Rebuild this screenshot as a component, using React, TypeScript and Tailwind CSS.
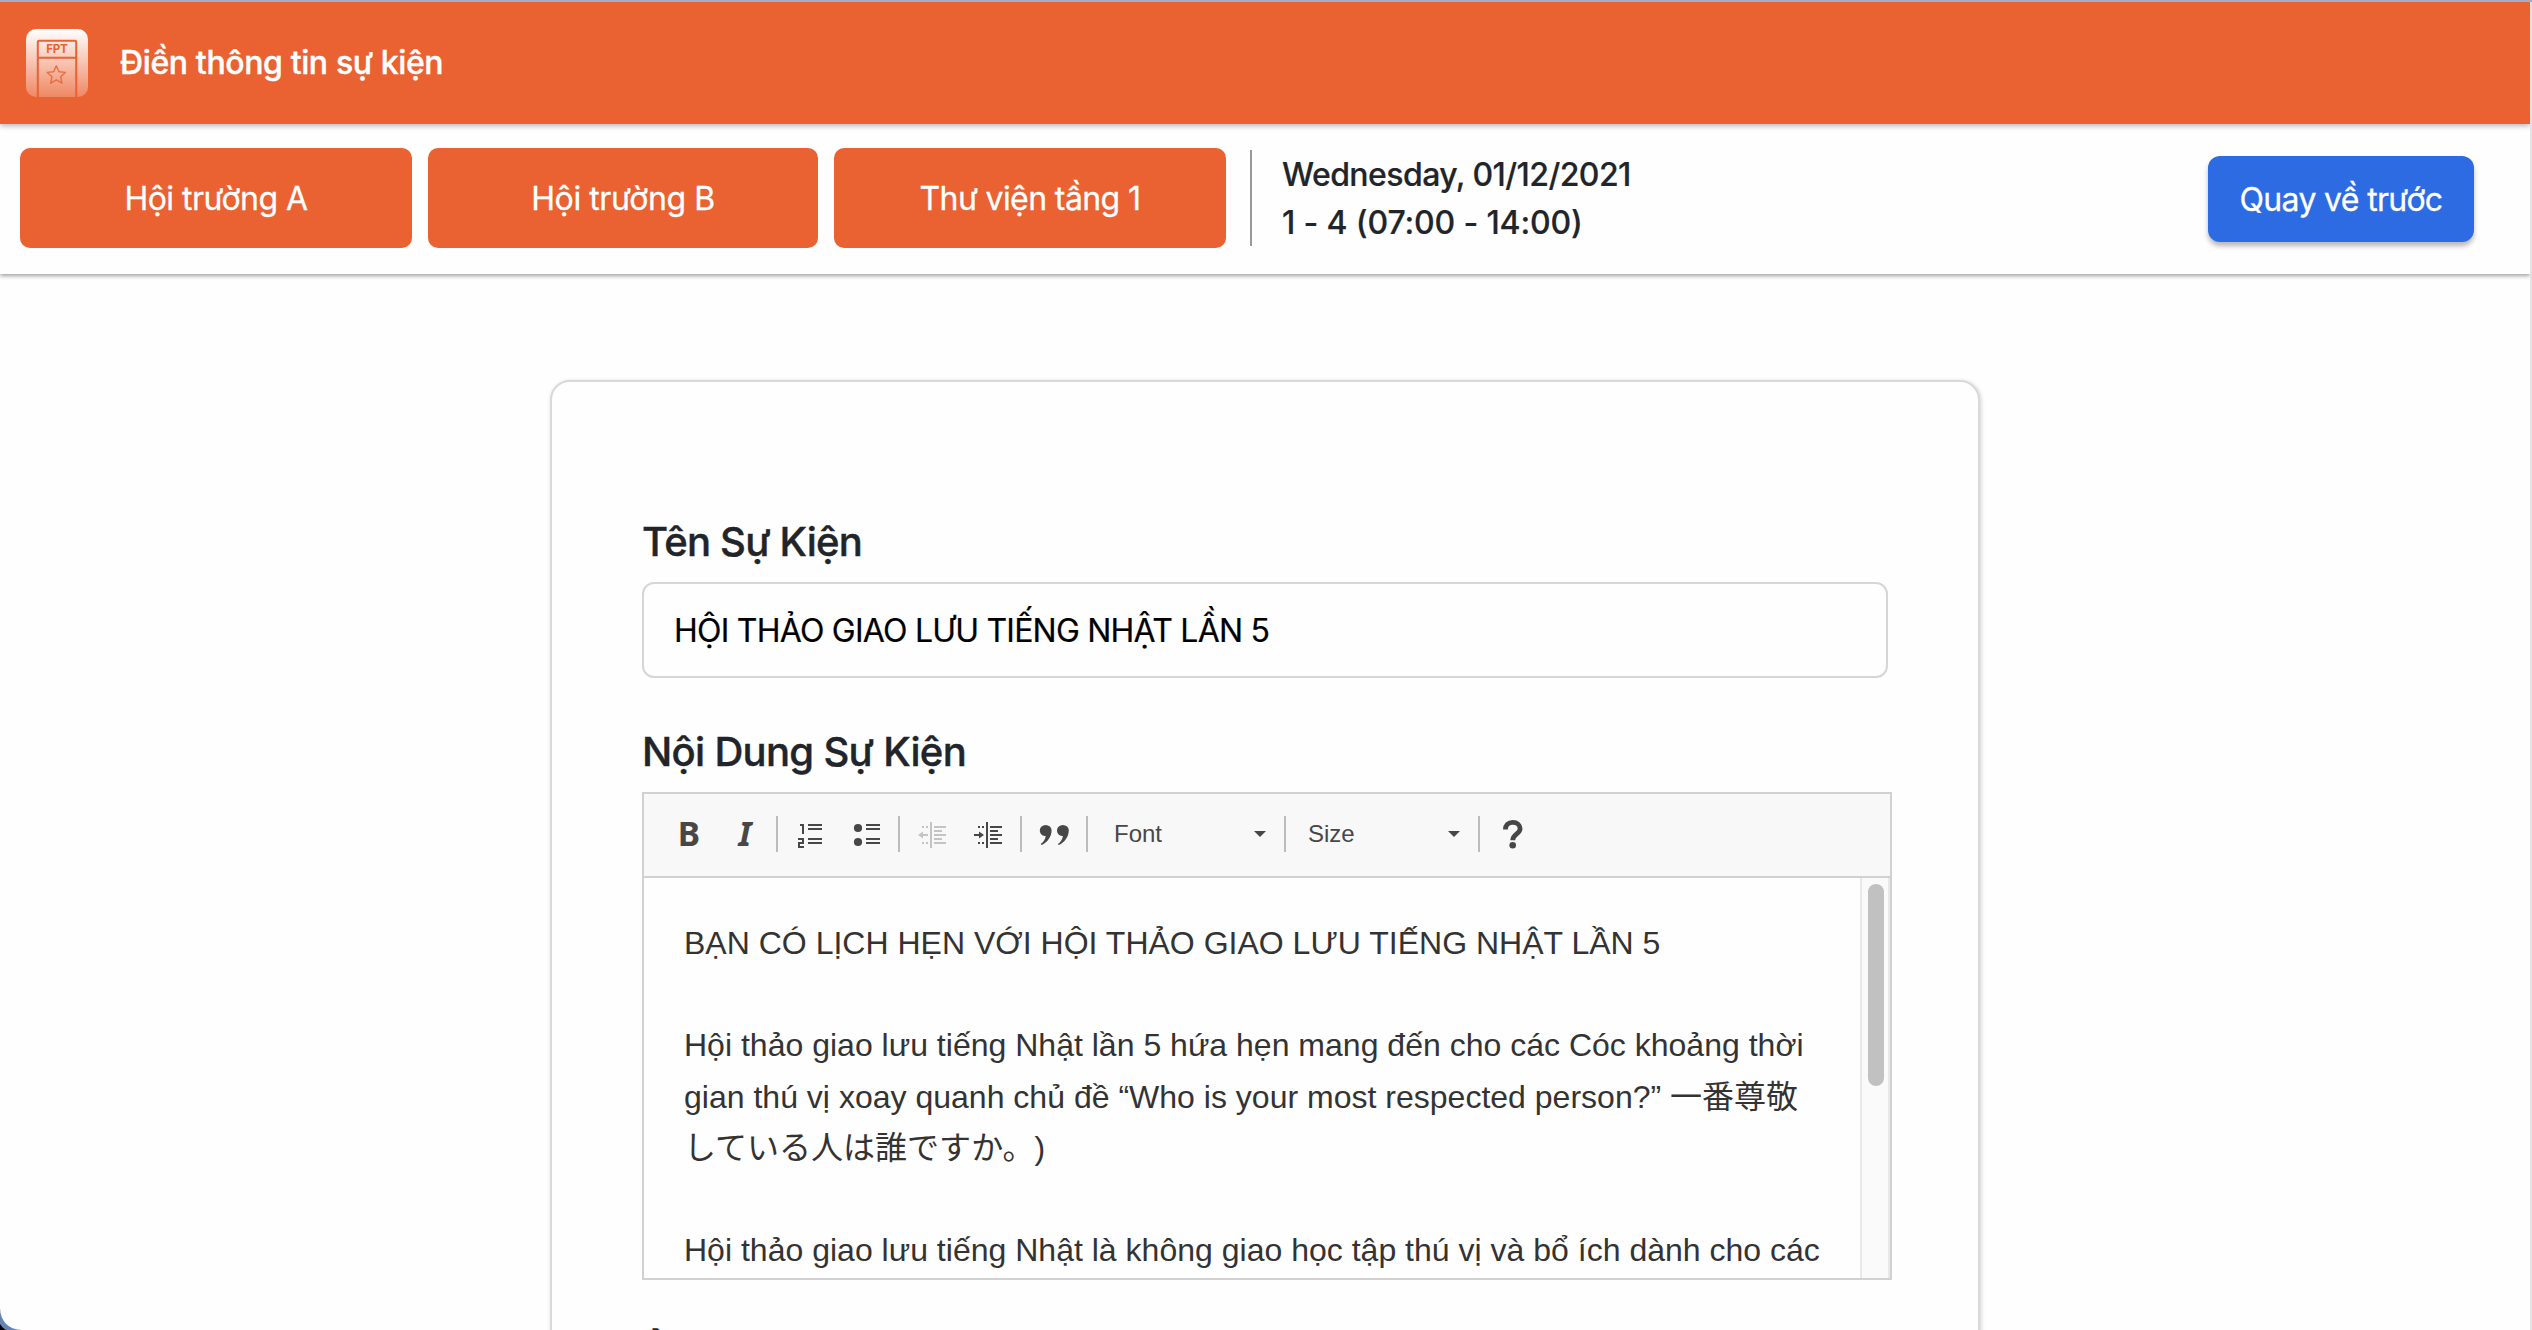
import type { ReactNode } from 'react';

const venues = [
  { name: 'Hội trường A', className: 'w-[392px] tracking-[-0.55px]' },
  { name: 'Hội trường B', className: 'w-[390px] tracking-[-0.42px]' },
  { name: 'Thư viện tầng 1', className: 'w-[392px] tracking-[-0.6px]' },
];

const lines = [
  'BẠN CÓ LỊCH HẸN VỚI HỘI THẢO GIAO LƯU TIẾNG NHẬT LẦN 5',
  '',
  'Hội thảo giao lưu tiếng Nhật lần 5 hứa hẹn mang đến cho các Cóc khoảng thời',
  'gian thú vị xoay quanh chủ đề “Who is your most respected person?” 一番尊敬',
  'している人は誰ですか。)',
  '',
  'Hội thảo giao lưu tiếng Nhật là không giao học tập thú vị và bổ ích dành cho các',
];

function Logo() {
  return (
    <svg className="ml-[26px] block h-[68px] w-[62px]" viewBox="0 0 62 68">
      <defs>
        <linearGradient id="logo-bg" x1="0" y1="0" x2="0" y2="1">
          <stop offset="0" stopColor="#fff" />
          <stop offset="1" stopColor="#fff" stopOpacity="0.24" />
        </linearGradient>
      </defs>
      <rect width="62" height="68" rx="10" fill="url(#logo-bg)" />
      <g fill="none" stroke="#ea6232">
        <path d="M11.8 68V13a1.3 1.3 0 0 1 1.3-1.3h35.8a1.3 1.3 0 0 1 1.3 1.3V68M12 28.7h38" strokeWidth="2" />
        <path
          d="M30.3 36.8l2.7 5.9 6.4.7-4.8 4.3 1.4 6.5-5.7-3.3-5.7 3.3 1.4-6.5-4.8-4.3 6.4-.7z"
          strokeWidth="1.4"
          strokeLinejoin="round"
          opacity="0.85"
        />
      </g>
      <text x="31" y="24" textAnchor="middle" fontFamily="Inter" fontWeight="700" fontSize="11.6" fill="#ea6232" textLength="21.5">
        FPT
      </text>
    </svg>
  );
}

function ToolButton({ children, muted = false }: { children: ReactNode; muted?: boolean }) {
  return (
    <button type="button" className="flex h-14 w-14 shrink-0 items-center justify-center">
      <svg viewBox="0 0 32 32" className={muted ? 'h-8 w-8 overflow-visible text-[#c4c4c4]' : 'h-8 w-8 overflow-visible text-[#474747]'}>
        {children}
      </svg>
    </button>
  );
}

function Separator() {
  return <span className="mx-1 h-9 w-0.5 shrink-0 bg-[#bcbcbc]" />;
}

function IndentLines() {
  return (
    <path
      fill="currentColor"
      d="M14 4h2v26h-2zM18 8h12v2H18zM18 12h8v2h-8zM18 16h12v2H18zM18 20h8v2h-8zM18 24h12v2H18zM6 8h2v2H6zM10 8h2v2h-2zM6 24h2v2H6zM10 24h2v2h-2z"
    />
  );
}

function Caret() {
  return (
    <svg className="h-[6px] w-3" viewBox="0 0 12 6">
      <path d="M0 0h12L6 6z" fill="#474747" />
    </svg>
  );
}

function Toolbar() {
  const quote = 'M1.8 12.3a5.9 5.4 0 0 1 11.8 0c0 6.4-4.2 12.3-10 14.7l-.9-.9c2.8-2 4.6-4.8 5-8.2-3.2.5-5.9-2-5.9-5.6z';
  return (
    <div className="flex h-[84px] items-center border-b-2 border-[#d1d1d1] bg-[#f8f8f8] pb-0.5 pl-[18px]">
      <ToolButton>
        <text x="3.7" y="28" fontFamily="Noto Sans" fontWeight="700" fontSize="33.5" fill="currentColor">B</text>
      </ToolButton>
      <ToolButton>
        <text x="8.4" y="28" fontFamily="Noto Sans" fontWeight="700" fontStyle="italic" fontSize="33.5" fill="currentColor">I</text>
      </ToolButton>
      <span className="ml-0.5 mr-1 h-9 w-0.5 shrink-0 bg-[#bcbcbc]" />
      <ToolButton>
        <path fill="currentColor" d="M14 6h14v2H14zM14 10h14v2H14zM14 20h14v2H14zM14 24h14v2H14zM6 6h4v10H8V8H6z" />
        <path fill="none" stroke="currentColor" strokeWidth="2" d="M4 21h5v4H5v4h5" />
      </ToolButton>
      <ToolButton>
        <path fill="currentColor" d="M16 6h14v2H16zM16 10h14v2H16zM16 20h14v2H16zM16 24h14v2H16z" />
        <circle cx="8" cy="10" r="4.1" fill="currentColor" />
        <circle cx="8" cy="24" r="4.1" fill="currentColor" />
      </ToolButton>
      <Separator />
      <ToolButton muted>
        <IndentLines />
        <path fill="currentColor" d="M2 17l5-3.5V16h5v2H7v2.5z" />
      </ToolButton>
      <ToolButton>
        <IndentLines />
        <path fill="currentColor" d="M12 17l-5-3.5V16H2v2h5v2.5z" />
      </ToolButton>
      <Separator />
      <ToolButton>
        <path fill="currentColor" d={quote} />
        <path fill="currentColor" d={quote} transform="translate(17.2 0)" />
      </ToolButton>
      <Separator />
      <div className="flex w-[188px] shrink-0 items-center justify-between pl-[22px] pr-[14px] text-[#474747]">
        <span className="text-2xl">Font</span>
        <Caret />
      </div>
      <Separator />
      <div className="flex w-[184px] shrink-0 items-center justify-between pl-[18px] pr-[14px] text-[#474747]">
        <span className="text-2xl">Size</span>
        <Caret />
      </div>
      <Separator />
      <ToolButton>
        <path
          fill="none"
          stroke="currentColor"
          strokeWidth="4.8"
          d="M9.4 11.6C9.4 7 12.4 4.4 16.8 4.4s7.3 2.6 7.3 6.4c0 5-7.4 5.2-7.4 11.4"
        />
        <circle cx="16.7" cy="27.3" r="3.3" fill="currentColor" />
      </ToolButton>
    </div>
  );
}

export default function App() {
  return (
    <div className="relative flex h-[1330px] w-[2532px] flex-col overflow-hidden bg-[#fefefe] font-['Inter',sans-serif] text-[#212529]">
      <div className="h-0.5 shrink-0 bg-[#a3adc6]" />
      <div className="flex min-h-0 flex-1">
        <div className="flex w-[2530px] flex-col overflow-hidden">
          <header className="relative z-10 flex h-[122px] shrink-0 items-center bg-[#ea6232] shadow-[0_2px_5px_rgba(0,0,0,0.28)]">
            <Logo />
            <h1 className="ml-[32px] whitespace-nowrap text-[32px] font-medium tracking-[-0.38px] text-white [-webkit-text-stroke:0.4px_currentColor]">Điền thông tin sự kiện</h1>
          </header>

          <section className="flex h-[150px] shrink-0 items-start bg-[#fefefe] pl-5 pr-14 shadow-[0_2px_4px_rgba(0,0,0,0.36)]">
            <div className="flex gap-4 pt-6">
              {venues.map((v) => (
                <button key={v.name} type="button" className={`h-[100px] shrink-0 whitespace-nowrap rounded-[10px] bg-[#ea6232] pt-0.5 text-[32px] text-white [-webkit-text-stroke:0.3px_currentColor] ${v.className}`}>
                  {v.name}
                </button>
              ))}
            </div>
            <div className="ml-6 mt-[26px] h-24 whitespace-nowrap border-l-2 border-[#999] pl-[30px] pt-px text-[32px] font-medium leading-[48px] [-webkit-text-stroke:0.2px_currentColor]">
              <p className="tracking-[-0.57px]">Wednesday, 01/12/2021</p>
              <p className="tracking-[-0.14px]">1 - 4 (07:00 - 14:00)</p>
            </div>
            <button type="button" className="ml-auto mt-8 h-[86px] w-[266px] whitespace-nowrap rounded-[12px] bg-[#2d6be3] pt-0.5 text-[32px] tracking-[-0.66px] text-white shadow-[0_4px_5px_rgba(0,0,0,0.28)] [-webkit-text-stroke:0.3px_currentColor]">
              Quay về trước
            </button>
          </section>

          <main className="ml-[550px] mt-[106px] h-[1100px] w-[1430px] shrink-0 rounded-t-[20px] border-2 border-[#d9d9d9] bg-[#fefefe] pl-[90px] pt-[130px] shadow-[1px_1px_4px_rgba(0,0,0,0.18)]">
            <label className="block h-[60px] whitespace-nowrap text-[40px] font-medium leading-[60px] tracking-[-0.78px] [-webkit-text-stroke:0.4px_currentColor]">Tên Sự Kiện</label>
            <div className="mt-[10px] flex h-24 w-[1246px] items-center whitespace-nowrap rounded-[12px] border-2 border-[#d6d6d6] pl-[30px] pt-px text-[32px] tracking-[-0.77px] text-black [-webkit-text-stroke:0.2px_currentColor]">
              HỘI THẢO GIAO LƯU TIẾNG NHẬT LẦN 5
            </div>
            <label className="mt-[44px] block h-[60px] whitespace-nowrap text-[40px] font-medium leading-[60px] tracking-[-0.69px] [-webkit-text-stroke:0.4px_currentColor]">Nội Dung Sự Kiện</label>
            <div className="mt-[10px] h-[488px] w-[1250px] border-2 border-[#d1d1d1] font-['Liberation_Sans','Noto_Sans_CJK_JP',sans-serif]">
              <Toolbar />
              <div className="flex h-[400px] overflow-hidden">
                <div className="w-[1216px] whitespace-nowrap pl-[40px] pt-[40px] text-[32px] leading-[51.2px] tracking-[0.01px] text-[#333] [text-spacing-trim:space-all]">
                  {lines.map((line, i) => (
                    <p key={i} className="h-[51.2px]">{line}</p>
                  ))}
                </div>
                <div className="h-full w-[30px] border-x-2 border-[#e8e8e8] bg-[#fafafa] pl-[6px] pt-[6px]">
                  <div className="h-[202px] w-4 rounded-full bg-[#c1c1c1]" />
                </div>
              </div>
            </div>
            <label className="mt-[42px] block h-[60px] whitespace-nowrap text-[40px] font-medium leading-[60px] tracking-[-0.65px] [-webkit-text-stroke:0.4px_currentColor]">Ảnh</label>
          </main>
        </div>
        <div className="w-0.5 shrink-0 bg-[#e2e2e2]" />
      </div>
      <svg className="absolute bottom-0 left-0 h-[22px] w-[22px]" viewBox="0 0 22 22">
        <path d="M0 0C0.5 13 8 21.5 22 22H0z" fill="#6683b5" />
        <path d="M0 16C1.5 18.5 3.5 20.5 6 22H0z" fill="#000" />
      </svg>
    </div>
  );
}
